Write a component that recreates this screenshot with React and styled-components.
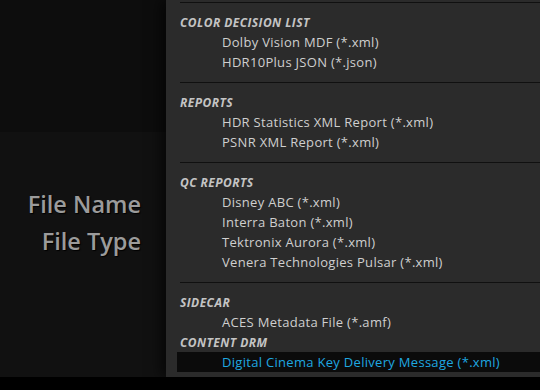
import React from "react";
import styled, { createGlobalStyle } from "styled-components";

const Global = createGlobalStyle`
  html, body { margin: 0; padding: 0; background: #000; }
  body { font-family: "Open Sans", "Noto Sans", sans-serif; }
  #root { width: 540px; height: 390px; overflow: hidden; }
`;

const Screen = styled.div`
  width: 540px;
  height: 390px;
  display: flex;
  flex-direction: column;
  background: #000;
`;

const Main = styled.div`
  height: 377px;
  display: flex;
`;

const BottomBar = styled.div`
  flex: 1;
  background: #000;
`;

const Side = styled.div`
  width: 166px;
  display: flex;
  flex-direction: column;
  background: #111;
`;

const SideTop = styled.div`
  height: 132px;
  background: #0d0d0d;
`;

const SideFields = styled.div`
  display: flex;
  flex-direction: column;
  align-items: flex-end;
  padding: 54px 25px 0 0;
`;

const FieldLabel = styled.div`
  font-family: "Open Sans", sans-serif;
  font-weight: 600;
  font-size: 23.5px;
  line-height: 37px;
  color: #9b9b9b;
  text-shadow: 1px 1px 1px #000;
`;

const Menu = styled.div`
  flex: 1;
  background: #2b2b2b;
  box-shadow: -6px 0 12px rgba(0, 0, 0, 0.55);
  padding: 2px 0 5px 11px;
  display: flex;
  flex-direction: column;
  position: relative;
`;

const Separator = styled.div`
  height: 1px;
  background: #101010;
  margin: 0 0 9px 3px;
  ${(p) => (p.$gap ? "margin-top: 10px;" : "")}
`;

const Header = styled.div`
  height: 20px;
  display: flex;
  align-items: center;
  padding-left: 3px;
  font-weight: 700;
  font-style: italic;
  font-size: 12px;
  letter-spacing: 0.45px;
  color: #c4c4c4;
`;

const Item = styled.div`
  height: 20px;
  display: flex;
  align-items: center;
  padding-left: 45px;
  font-size: 13px;
  letter-spacing: 0.3px;
  white-space: nowrap;
  color: ${(p) => (p.$selected ? "#1fa8e0" : "#cfcfcf")};
  background: ${(p) => (p.$selected ? "#0b0b0b" : "transparent")};
`;

const sections = [
  { title: "COLOR DECISION LIST", items: ["Dolby Vision MDF (*.xml)", "HDR10Plus JSON (*.json)"] },
  { title: "REPORTS", items: ["HDR Statistics XML Report (*.xml)", "PSNR XML Report (*.xml)"] },
  {
    title: "QC REPORTS",
    items: [
      "Disney ABC (*.xml)",
      "Interra Baton (*.xml)",
      "Tektronix Aurora (*.xml)",
      "Venera Technologies Pulsar (*.xml)",
    ],
  },
];

export default function App() {
  return (
    <>
      <Global />
      <Screen>
        <Main>
          <Side>
            <SideTop />
            <SideFields>
              <FieldLabel>File Name</FieldLabel>
              <FieldLabel>File Type</FieldLabel>
            </SideFields>
          </Side>
          <Menu>
            {sections.map((s, i) => (
              <React.Fragment key={s.title}>
                <Separator $gap={i > 0} />
                <Header>{s.title}</Header>
                {s.items.map((it) => (
                  <Item key={it}>{it}</Item>
                ))}
              </React.Fragment>
            ))}
            <Separator $gap />
            <Header>SIDECAR</Header>
            <Item>ACES Metadata File (*.amf)</Item>
            <Header>CONTENT DRM</Header>
            <Item $selected>Digital Cinema Key Delivery Message (*.xml)</Item>
          </Menu>
        </Main>
        <BottomBar />
      </Screen>
    </>
  );
}
